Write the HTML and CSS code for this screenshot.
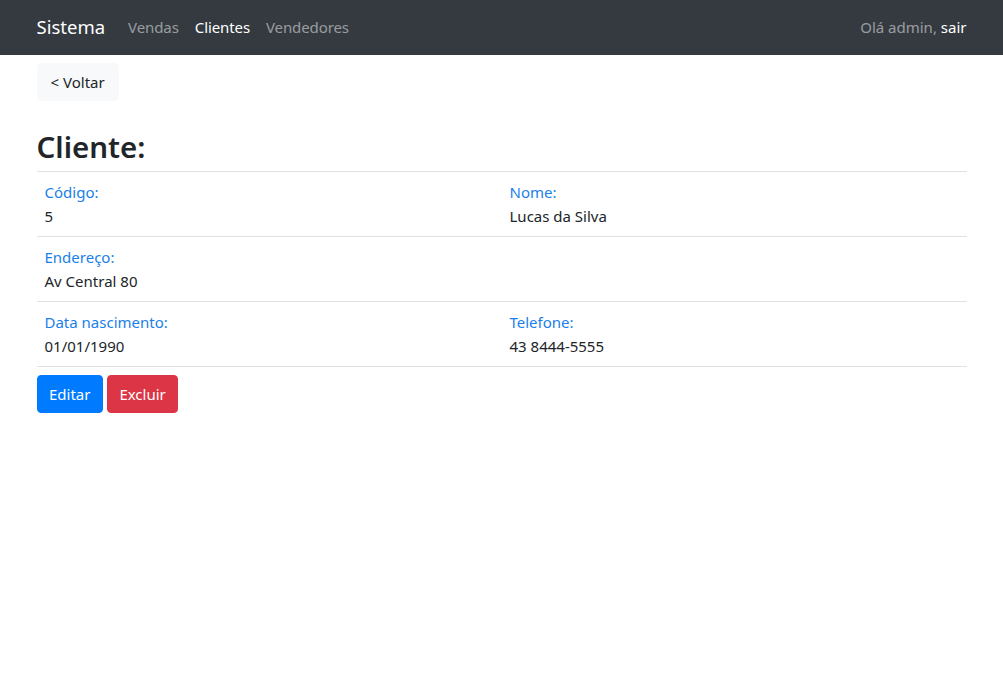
FILE: index.html
```html
<!DOCTYPE html>
<html lang="pt-BR">
<head>
<meta charset="utf-8">
<title>Sistema</title>
<link rel="stylesheet" href="styles.css">
</head>
<body>
<nav class="navbar">
  <div class="container nav-inner">
    <div class="nav-left">
      <a class="brand" href="#">Sistema</a>
      <ul class="nav-links">
        <li><a class="nav-link" href="#">Vendas</a></li>
        <li><a class="nav-link active" href="#">Clientes</a></li>
        <li><a class="nav-link" href="#">Vendedores</a></li>
      </ul>
    </div>
    <div class="nav-text">Olá admin, <a class="nav-sair" href="#">sair</a></div>
  </div>
</nav>
<main class="container">
  <div class="back-row"><a class="btn btn-light" href="#">&lt; Voltar</a></div>
  <h2 class="title">Cliente:</h2>
  <table class="info">
    <tr>
      <td><div class="label">Código:</div><div class="value">5</div></td>
      <td><div class="label">Nome:</div><div class="value">Lucas da Silva</div></td>
    </tr>
    <tr>
      <td><div class="label">Endereço:</div><div class="value">Av Central 80</div></td>
      <td></td>
    </tr>
    <tr>
      <td><div class="label">Data nascimento:</div><div class="value">01/01/1990</div></td>
      <td><div class="label">Telefone:</div><div class="value">43 8444-5555</div></td>
    </tr>
  </table>
  <div class="actions">
    <a class="btn btn-primary" href="#">Editar</a>
    <a class="btn btn-danger" href="#">Excluir</a>
  </div>
</main>
</body>
</html>
```

FILE: styles.css
```css
* { box-sizing: border-box; }
html, body {
  margin: 0;
  padding: 0;
  font-family: "Noto Sans", "Open Sans", sans-serif;
  font-size: 15px;
  line-height: 24px;
  color: #212529;
  background: #fff;
}
a { text-decoration: none; }
.container {
  width: 960px;
  margin: 0 auto;
  padding: 0 15px;
}
.navbar {
  background: #343a40;
  height: 55px;
}
.nav-inner {
  height: 55px;
  display: flex;
  align-items: center;
  justify-content: space-between;
  padding-bottom: 2px;
}
.nav-left { display: flex; align-items: center; }
.brand {
  color: #fff;
  font-size: 18.5px;
  line-height: 30px;
  margin-right: 15px;
}
.nav-links {
  display: flex;
  list-style: none;
  margin: 0;
  padding: 0;
}
.nav-link {
  display: block;
  padding: 8px 8px;
  color: rgba(255,255,255,.5);
  letter-spacing: -0.1px;
}
.nav-link.active { color: #fff; }
.nav-text { color: rgba(255,255,255,.5); }
.nav-sair { color: #fff; }

.back-row { padding-top: 8px; }
.btn {
  display: inline-block;
  padding: 7px 11.5px;
  border: 1px solid transparent;
  border-radius: 4px;
  font-size: 15px;
  line-height: 22px;
}
.btn-light { background: #f8f9fa; border-color: #f8f9fa; color: #212529; padding: 7px 13px; }
.btn-primary { background: #007bff; border-color: #007bff; color: #fff; }
.btn-danger { background: #dc3545; border-color: #dc3545; color: #fff; }
.title {
  font-size: 29.5px;
  font-weight: 600;
  line-height: 38px;
  margin: 27px 0 5px;
}
.info {
  width: 100%;
  border-collapse: collapse;
  border-bottom: 1px solid #dee2e6;
}
.info td {
  width: 50%;
  border-top: 1px solid #dee2e6;
  padding: 8px;
  vertical-align: top;
}
.label { color: #1a7fe8; }
.actions { margin-top: 8px; }
```
